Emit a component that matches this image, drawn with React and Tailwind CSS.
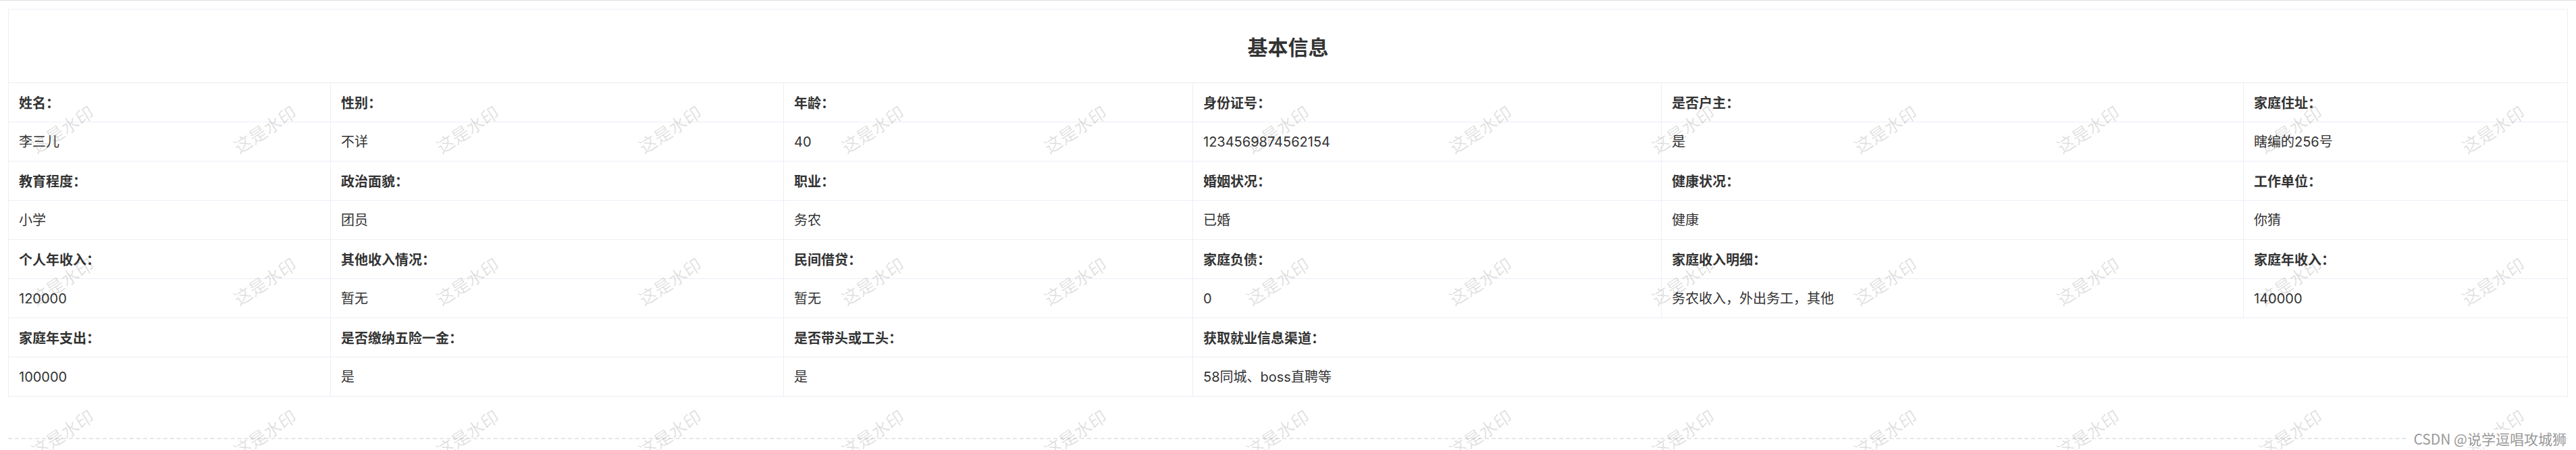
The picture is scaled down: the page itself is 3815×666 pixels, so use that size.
import React from 'react';

const rows = [
  [
    ['姓名：', '李三儿'],
    ['性别：', '不详'],
    ['年龄：', '40'],
    ['身份证号：', '1234569874562154'],
    ['是否户主：', '是'],
    ['家庭住址：', '瞎编的256号'],
  ],
  [
    ['教育程度：', '小学'],
    ['政治面貌：', '团员'],
    ['职业：', '务农'],
    ['婚姻状况：', '已婚'],
    ['健康状况：', '健康'],
    ['工作单位：', '你猜'],
  ],
  [
    ['个人年收入：', '120000'],
    ['其他收入情况：', '暂无'],
    ['民间借贷：', '暂无'],
    ['家庭负债：', '0'],
    ['家庭收入明细：', '务农收入，外出务工，其他'],
    ['家庭年收入：', '140000'],
  ],
  [
    ['家庭年支出：', '100000'],
    ['是否缴纳五险一金：', '是'],
    ['是否带头或工头：', '是'],
    ['获取就业信息渠道：', '58同城、boss直聘等', true],
  ],
];

const marks = [];
for (let r = 0; r < 3; r++) {
  for (let c = 0; c < 13; c++) {
    marks.push({ x: 92 + c * 300, y: 190 + r * 225 });
  }
}

function Cell({ children, wide, bold }) {
  return (
    <div
      className={
        'h-[58px] flex items-center pl-[15px] border-r border-b border-[#ebeef5] text-[20px] text-[#333] ' +
        (bold ? 'font-bold ' : 'font-normal font-[Inter,"Noto_Sans_CJK_SC",sans-serif] ') +
        (wide ? 'col-span-3' : '')
      }
    >
      {children}
    </div>
  );
}

export default function App() {
  return (
    <div
      className="relative h-[666px] w-[3815px] overflow-hidden bg-white border-t border-[#dcdfe6]"
      style={{ fontFamily: '"Noto Sans CJK SC", "Noto Sans", sans-serif' }}
    >
      <div className="px-3 pt-3">
        <div className="grid grid-cols-[477px_671px_606px_694px_862px_480px] border-l border-t border-[#ebeef5]">
          <div className="col-span-6 h-[109px] flex items-center justify-center border-r border-b border-[#ebeef5] text-[30px] font-bold text-[#333]">
            基本信息
          </div>
          {rows.map((row, i) => (
            <React.Fragment key={i}>
              {row.map(([label, , wide]) => (
                <Cell key={label} bold wide={wide}>
                  {label}
                </Cell>
              ))}
              {row.map(([label, value, wide]) => (
                <Cell key={label + 'v'} wide={wide}>
                  {value}
                </Cell>
              ))}
            </React.Fragment>
          ))}
        </div>
        <div className="mt-[61px] border-t-2 border-dashed border-[#e6e6e6]" />
      </div>

      {/* watermark */}
      <div className="pointer-events-none absolute inset-0">
        {marks.map((m, i) => (
          <span
            key={i}
            className="absolute -translate-x-1/2 -translate-y-1/2 -rotate-[33deg] whitespace-nowrap text-[26px] leading-none text-black/[0.12]"
            style={{ left: m.x, top: m.y }}
          >
            这是水印
          </span>
        ))}
      </div>

      <div className="absolute right-[14px] top-[635px] bg-white pl-2 text-[21px] leading-[26px] text-[#999]">
        CSDN @说学逗唱攻城狮
      </div>
    </div>
  );
}
